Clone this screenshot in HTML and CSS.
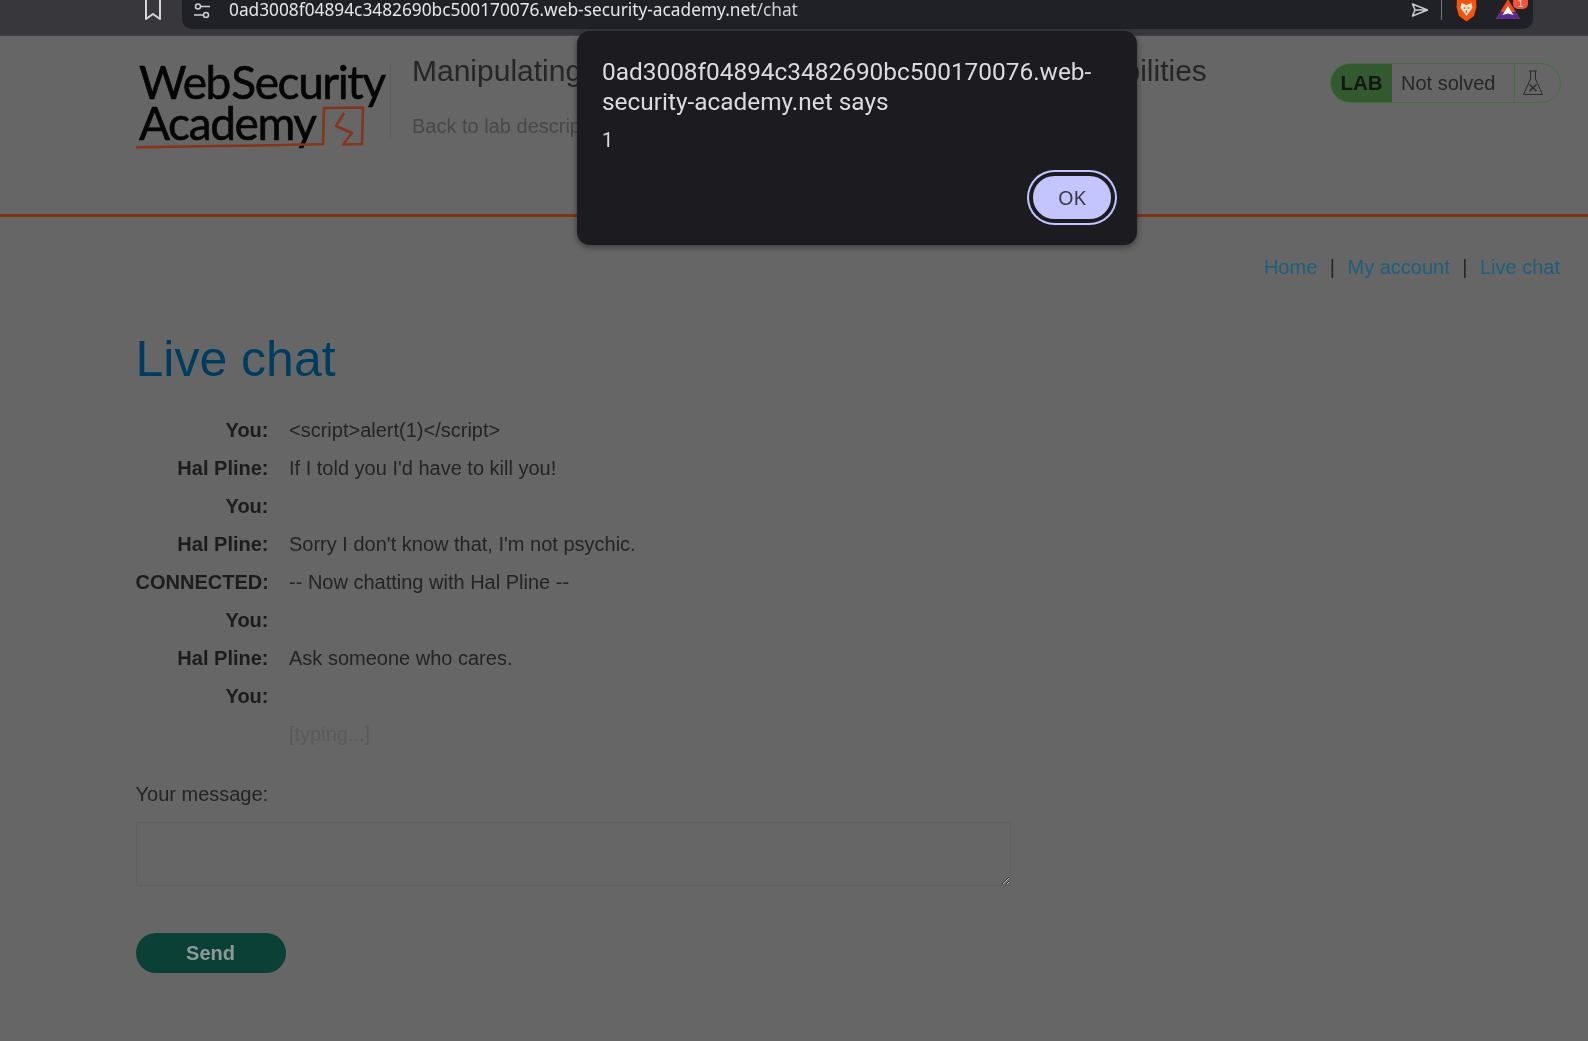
FILE: index.html
```html
<!DOCTYPE html>
<html lang="en">
<head>
	<meta charset="utf-8">
	<title>Live chat</title>
	<link rel="stylesheet" href="styles.css">
</head>
<body>
	<!-- browser toolbar, top of it is cut off in the shot -->
	<div class="toolbar">
		<svg class="bookmark-icon" width="18" height="20" viewBox="0 0 18 20"><path d="M2 -3V19L9 14L16 19V-3" fill="none" stroke="#d6d6d8" stroke-width="2" stroke-linejoin="round"/></svg>
		<div class="urlbar">
			<svg class="tune-icon" width="18" height="18" viewBox="0 0 18 18" fill="none" stroke="#d0d0d4" stroke-width="1.5"><circle cx="5" cy="4.5" r="2.5"/><path d="M8 4.5H17"/><circle cx="13" cy="13" r="2.5"/><path d="M1 13H10"/></svg>
			<span class="url"><span class="url-host">0ad3008f04894c3482690bc500170076.web-security-academy.net</span>/chat</span>
			<svg class="send-icon" width="18" height="16" viewBox="0 0 18 16"><path d="M1.500 2L16.500 8L1.500 14L4 8ZM4 8H16" fill="none" stroke="#c8c8cc" stroke-width="1.6" stroke-linejoin="round"/></svg>
			<span class="urlbar-sep"></span>
			<svg class="brave-icon" width="21" height="22" viewBox="0 0 21 22"><path d="M1 -2H20L20.500 7L18 16L10.500 21.500L3 16L0.500 7Z" fill="#f5540f"/><path d="M5.500 3L10.500 5L15.500 3L16.500 8L13 12.500L10.500 16L8 12.500L4.500 8Z" fill="#ffe9df"/><path d="M7.500 8H9.500M11.500 8H13.500M10.500 10V13" stroke="#f5540f" stroke-width="1.400"/></svg>
			<div class="rewards">
				<svg width="24" height="21" viewBox="0 0 24 21"><path d="M12 -1L24 19H0Z" fill="#f0481f"/><path d="M0 19L4.500 12H19.500L24 19Z" fill="#5c2a8c"/><path d="M12 6L17.500 15L12 13.500L6.500 15Z" fill="#fff"/></svg>
				<span class="rewards-badge">1</span>
			</div>
		</div>
	</div>

	<div class="page">
		<header class="lab-header">
			<div class="logo">
				<div class="logo-line">Web Security</div>
				<div class="logo-line logo-line-second">Academy</div>
				<svg class="logo-mark" width="232" height="46" viewBox="0 0 232 46" fill="none" stroke="#84351a" stroke-width="2.500" stroke-linejoin="round"><path d="M0 42.500C50 41 120 41 187 39L188 3L227 2.500L226 39L207 39.500L216 28L200 21L208 8"/></svg>
			</div>
			<div class="lab-title">
				<h2>Manipulating WebSocket messages to exploit vulnerabilities</h2>
				<a class="back-link" href="#">Back to lab description</a>
			</div>
			<div class="lab-status">
				<span class="status-lab">LAB</span>
				<span class="status-text">Not solved</span>
				<span class="status-flask">
					<svg width="22" height="28" viewBox="0 0 22 28" fill="none" stroke="#2b2b2b" stroke-width="1"><path d="M7 2H15M8.500 2V10L1.500 25.500H20.500L13.500 10V2"/><path d="M7.500 15.500L14.500 22M14.500 15.500L7.500 22" stroke-width="1.500"/></svg>
				</span>
			</div>
		</header>

		<nav class="site-nav">
			<a href="#">Home</a><span class="nav-sep">|</span><a href="#">My account</a><span class="nav-sep">|</span><a href="#">Live chat</a>
		</nav>

		<main class="content">
			<h1>Live chat</h1>
			<div class="chat">
				<div class="who">You:</div><div>&lt;script&gt;alert(1)&lt;/script&gt;</div>
				<div class="who">Hal Pline:</div><div>If I told you I'd have to kill you!</div>
				<div class="who">You:</div><div></div>
				<div class="who">Hal Pline:</div><div>Sorry I don't know that, I'm not psychic.</div>
				<div class="who">CONNECTED:</div><div>-- Now chatting with Hal Pline --</div>
				<div class="who">You:</div><div></div>
				<div class="who">Hal Pline:</div><div>Ask someone who cares.</div>
				<div class="who">You:</div><div></div>
				<div class="who"></div><div class="typing">[typing...]</div>
			</div>
			<form class="chat-form">
				<label for="message">Your message:</label>
				<textarea id="message"></textarea>
				<button type="button" class="send-btn">Send</button>
			</form>
		</main>
	</div>

	<!-- the alert box, sits over toolbar and page -->
	<div class="alert">
		<div class="alert-title">0ad3008f04894c3482690bc500170076.web-security-academy.net says</div>
		<div class="alert-msg">1</div>
		<div class="alert-actions">
			<button type="button" class="alert-ok">OK</button>
		</div>
	</div>
</body>
</html>
```

FILE: styles.css
```css
html, body {
	margin: 0;
	height: 100%;
}

body {
	position: relative;
	overflow: hidden;
	background: #666666;
	color: #222222;
	font-family: "Liberation Sans", Arial, sans-serif;
	font-size: 20px;
}

a {
	text-decoration: none;
}

/* the shot is a bit soft everywhere */
.toolbar, .page, .alert {
	filter: blur(0.4px);
}

/* toolbar */
.toolbar {
	display: flex;
	align-items: flex-start;
	height: 36px;
	box-sizing: border-box;
	background: #38383c;
	border-bottom: 1px solid #434347;
}

.bookmark-icon {
	margin-left: 144px;
	margin-right: 20px;
}

.urlbar {
	flex: none;
	display: flex;
	align-items: flex-start;
	width: 1351px;
	height: 29px;
	box-sizing: border-box;
	background: #202126;
	border-radius: 0 0 10px 10px;
	color: #d2d2d5;
}

.tune-icon {
	margin: 2px 0 0 11px;
}

.url {
	margin-left: 18px;
	font-family: "Noto Sans", sans-serif;
	font-size: 17.3px;
	line-height: 20px;
	white-space: nowrap;
}

.url-host {
	color: #e6e6e8;
}

.send-icon {
	margin: 2px 0 0 auto;
}

.urlbar-sep {
	width: 1px;
	height: 20px;
	margin: 0 14px 0 12px;
	background: #77777a;
}

.brave-icon {
	margin-right: 19px;
}

.rewards {
	position: relative;
	width: 24px;
	height: 21px;
	margin-right: 13px;
}

.rewards-badge {
	position: absolute;
	top: -4px;
	right: -8px;
	width: 15px;
	height: 13px;
	border-radius: 5px;
	background: #f0533a;
	color: #ffd9d0;
	font-size: 10px;
	line-height: 15px;
	text-align: center;
}

/* lab header */
.lab-header {
	display: flex;
	align-items: flex-start;
	height: 181px;
	padding: 17px 27px 0 135px;
	box-sizing: border-box;
	border-bottom: 3px solid #7f3318;
}

.logo {
	position: relative;
	flex: none;
	width: 256px;
	height: 77px;
	margin-top: 10px;
	box-sizing: border-box;
	border-right: 1px solid #5e5e5e;
	color: #050505;
	font-family: Lato, sans-serif;
	font-size: 46px;
	line-height: 41px;
	letter-spacing: -1.4px;
	word-spacing: -9px;
	white-space: nowrap;
	-webkit-text-stroke: 0.6px #050505;
}

.logo-line {
	margin: -2px 0 0 4px;
}

.logo-line-second {
	margin-top: 0;
}

.logo-mark {
	position: absolute;
	left: 1px;
	top: 42px;
}

.lab-title {
	margin-left: 21px;
	flex: 1;
}

.lab-title h2 {
	margin: 0;
	font-size: 30px;
	font-weight: normal;
	line-height: 36px;
	color: #262626;
	white-space: nowrap;
}

.back-link {
	display: block;
	margin-top: 25px;
	color: #484848;
	line-height: 24px;
}

.lab-status {
	display: flex;
	flex: none;
	width: 231px;
	height: 40px;
	margin-top: 10px;
	margin-left: auto;
	box-sizing: border-box;
	border: 1px solid #456e40;
	border-radius: 20px;
	line-height: 38px;
	overflow: hidden;
}

.status-lab {
	width: 61px;
	background: #33592f;
	color: #161616;
	font-weight: bold;
	font-size: 20.5px;
	text-align: center;
}

.status-text {
	width: 123px;
	padding-left: 9px;
	box-sizing: border-box;
	border-right: 1px solid #456e40;
	color: #262626;
}

.status-flask {
	flex: 1;
	display: flex;
	align-items: center;
	justify-content: center;
	padding-right: 10px;
}

/* nav */
.site-nav {
	display: flex;
	justify-content: flex-end;
	padding: 39px 28px 0 0;
	line-height: 22px;
}

.site-nav a {
	color: #1d5f7d;
}

.nav-sep {
	margin: 0 12.500px;
	color: #262626;
}

/* chat */
.content {
	padding-left: 135.500px;
}

h1 {
	margin: 52px 0 0;
	color: #003c60;
	font-size: 50px;
	font-weight: normal;
	line-height: 58px;
}

.chat {
	display: grid;
	grid-template-columns: 133px 1fr;
	grid-auto-rows: 38px;
	column-gap: 20.500px;
	margin-top: 23px;
	line-height: 38px;
	color: #242424;
}

.who {
	font-weight: bold;
	text-align: right;
	color: #1c1c1c;
	white-space: nowrap;
}

.typing {
	color: #5a5a5a;
}

.chat-form {
	margin-top: 30px;
}

.chat-form label {
	display: block;
	line-height: 22px;
	color: #242424;
}

.chat-form textarea {
	display: block;
	width: 875px;
	height: 64px;
	margin-top: 17px;
	padding: 0;
	box-sizing: border-box;
	background: transparent;
	border: 1px solid #5e5e5e;
	outline: none;
}

.send-btn {
	display: block;
	width: 150px;
	height: 40px;
	margin-top: 47px;
	padding: 0;
	border: 0;
	border-radius: 20px;
	background: #0b4036;
	color: #8d9b97;
	font-family: inherit;
	font-size: 20px;
	font-weight: bold;
}

/* alert dialog */
.alert {
	position: absolute;
	left: 577px;
	top: 31px;
	width: 560px;
	height: 214px;
	box-sizing: border-box;
	padding: 26px 25px 20px;
	background: #1c1b20;
	border-radius: 13px;
	box-shadow: 0 2px 6px rgba(0, 0, 0, 0.45);
	color: #dcdcdf;
	font-family: Roboto, sans-serif;
	font-size: 24.4px;
	line-height: 30px;
}

.alert-msg {
	margin-top: 8px;
	font-size: 20px;
}

.alert-actions {
	display: flex;
	justify-content: flex-end;
	margin-top: 15px;
	margin-right: -5px;
}

.alert-ok {
	width: 82px;
	height: 47px;
	margin: 4px;
	padding: 0;
	border: 2px solid #1c1b20;
	border-radius: 24px;
	background: #c4c4ff;
	box-shadow: 0 0 0 2px #1c1b20, 0 0 0 4px #c4c4ff;
	color: #3a3a46;
	font-family: "Noto Sans", sans-serif;
	font-size: 20px;
}
```
